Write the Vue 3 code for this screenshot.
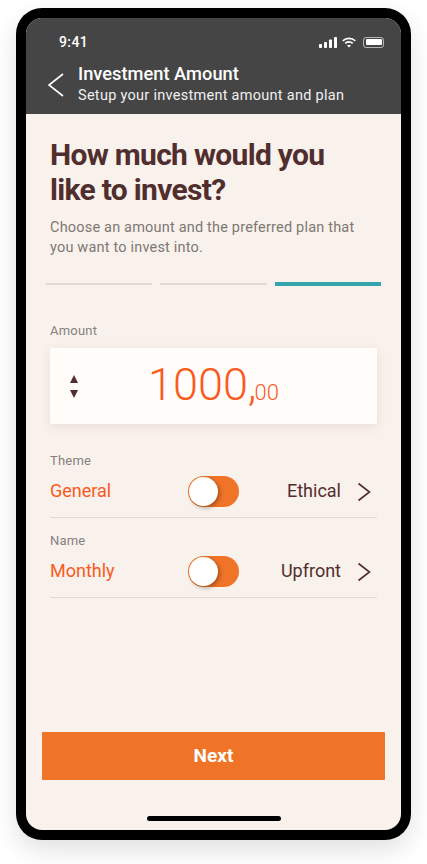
<template>
  <div class="page">
    <div class="phone">
      <div class="screen">
        <header class="header">
          <div class="status">
            <span class="time">9:41</span>
            <div class="status-icons">
              <svg width="18" height="11" viewBox="0 0 18 11">
                <rect x="0" y="7" width="3" height="4" rx="0.7" />
                <rect x="5" y="5" width="3" height="6" rx="0.7" />
                <rect x="10" y="2.5" width="3" height="8.5" rx="0.7" />
                <rect x="15" y="0" width="3" height="11" rx="0.7" />
              </svg>
              <svg width="16" height="11" viewBox="0 0 16 11">
                <path d="M8 2.2c2.2 0 4.2.9 5.7 2.3l1.1-1.2A9.9 9.9 0 0 0 8 .6 9.9 9.9 0 0 0 1.200 3.300l1.100 1.200A8.300 8.300 0 0 1 8 2.200z" />
                <path d="M8 5.800c1.200 0 2.300.5 3.100 1.200l1.200-1.200A6.300 6.300 0 0 0 8 4.100c-1.700 0-3.200.6-4.300 1.700l1.200 1.200A4.600 4.600 0 0 1 8 5.800z" />
                <path d="M8 7.700c-.8 0-1.400.3-1.900.7L8 10.600l1.900-2.200A2.900 2.900 0 0 0 8 7.700z" />
              </svg>
              <div class="battery"><div class="battery-fill"></div></div>
            </div>
          </div>
          <div class="nav">
            <svg class="back" width="18" height="26" viewBox="0 0 18 26">
              <path d="M16 2 2 13l14 11" />
            </svg>
            <div>
              <div class="nav-title">Investment Amount</div>
              <div class="nav-sub">Setup your investment amount and plan</div>
            </div>
          </div>
        </header>

        <main class="body">
          <h1 class="title">How much would you<br />like to invest?</h1>
          <p class="intro">Choose an amount and the preferred plan that<br />you want to invest into.</p>

          <div class="steps">
            <div v-for="step in steps" :key="step" class="step" :class="{ active: step === current }"></div>
          </div>

          <div class="form">
            <div class="label">Amount</div>
            <div class="amount-card">
              <div class="stepper">
                <span class="tri up"></span>
                <span class="tri down"></span>
              </div>
              <div class="amount">1000,<small>00</small></div>
            </div>

            <div class="rows">
              <div v-for="row in rows" :key="row.label" class="row">
                <div class="label">{{ row.label }}</div>
                <div class="row-line">
                  <span class="left">{{ row.left }}</span>
                  <div class="toggle"><div class="knob"></div></div>
                  <div class="right">
                    <span>{{ row.right }}</span>
                    <svg width="14" height="20" viewBox="0 0 14 20">
                      <path d="M1.500 1.500l11 8.500-11 8.500" />
                    </svg>
                  </div>
                </div>
              </div>
            </div>
          </div>

          <div class="footer">
            <button class="next">Next</button>
            <div class="home"></div>
          </div>
        </main>
      </div>
    </div>
  </div>
</template>

<script setup>
const steps = [1, 2, 3]
const current = 3

const rows = [
  { label: 'Theme', left: 'General', right: 'Ethical' },
  { label: 'Name', left: 'Monthly', right: 'Upfront' }
]
</script>

<style scoped>
.page {
  width: 427px;
  height: 864px;
  padding: 8px 16px 24px;
  box-sizing: border-box;
  font-family: Roboto, "Noto Sans", sans-serif;
}

.phone {
  height: 832px;
  padding: 10px;
  box-sizing: border-box;
  background: #000;
  border-radius: 26px;
  box-shadow: 0 10px 24px rgba(0, 0, 0, 0.12);
}

.screen {
  height: 100%;
  display: flex;
  flex-direction: column;
  background: #f9f1eb;
  border-radius: 16px;
  overflow: hidden;
}

.header {
  height: 96px;
  flex: none;
  background: #454545;
  color: #fff;
}

.status {
  display: flex;
  justify-content: space-between;
  align-items: center;
  padding: 15px 17px 0 33px;
}

.time {
  font-size: 14px;
  font-weight: 500;
  line-height: 18px;
  letter-spacing: 0.4px;
}

.status-icons {
  display: flex;
  align-items: center;
  gap: 4px;
}

.status-icons svg {
  fill: #fff;
}

.battery {
  width: 21px;
  height: 11px;
  padding: 1.500px;
  margin-left: 2px;
  box-sizing: border-box;
  border: 1px solid rgba(255, 255, 255, 0.6);
  border-radius: 3px;
}

.battery-fill {
  height: 100%;
  background: #fff;
  border-radius: 1px;
}

.nav {
  display: flex;
  align-items: center;
  gap: 13px;
  padding: 11px 0 0 21px;
}

.back {
  margin-top: 1px;
}

.back path {
  fill: none;
  stroke: #fff;
  stroke-width: 1.600;
}

.nav-title {
  font-size: 18.300px;
  font-weight: 500;
  line-height: 24px;
}

.nav-sub {
  font-size: 14.500px;
  line-height: 20px;
  letter-spacing: 0.28px;
  color: #f0f0f0;
}

.body {
  flex: 1;
  display: flex;
  flex-direction: column;
  padding: 0 24px;
}

.title {
  margin: 23px 0 0;
  font-size: 30px;
  font-weight: 700;
  line-height: 35px;
  letter-spacing: -0.7px;
  color: #512e2e;
}

.intro {
  margin: 11px 0 0;
  font-size: 14.500px;
  line-height: 20px;
  letter-spacing: 0.19px;
  color: #7d7875;
}

.steps {
  display: flex;
  gap: 8px;
  align-items: center;
  margin: 24px -4px 0;
  height: 4px;
}

.step {
  flex: 1;
  height: 2px;
  background: #e3d9d3;
}

.step.active {
  height: 4px;
  background: #33a5ac;
}

.form {
  margin: 37px 0 0;
}

.label {
  font-size: 13px;
  line-height: 16px;
  letter-spacing: 0.2px;
  color: #858180;
}

.amount-card {
  display: flex;
  align-items: center;
  height: 76px;
  margin: 9px 0 0;
  background: #fffcfa;
  border-radius: 2px;
  box-shadow: 0 3px 10px rgba(120, 90, 70, 0.12);
}

.stepper {
  display: flex;
  flex-direction: column;
  gap: 7px;
  margin-left: 20px;
}

.tri {
  width: 0;
  height: 0;
  border-left: 4px solid transparent;
  border-right: 4px solid transparent;
}

.tri.up {
  border-bottom: 8px solid #512e2e;
}

.tri.down {
  border-top: 8px solid #512e2e;
}

.amount {
  margin: 0 0 4px 70px;
  font-size: 45px;
  font-weight: 300;
  line-height: 1;
  color: #fa5a1e;
}

.amount small {
  font-size: 22px;
  margin-left: -2px;
}

.rows {
  margin-top: 28px;
}

.row {
  height: 66px;
  box-sizing: border-box;
  border-bottom: 1px solid #e3d9d3;
}

.row + .row {
  margin-top: 14px;
}

.row .label {
  line-height: 18px;
}

.row-line {
  display: flex;
  align-items: center;
  height: 31px;
  margin-top: 6px;
}

.left {
  width: 138px;
  margin-bottom: 2px;
  font-size: 18px;
  color: #fa5a1e;
}

.toggle {
  width: 51px;
  height: 31px;
  padding: 1px;
  box-sizing: border-box;
  background: #f07428;
  border-radius: 16px;
}

.knob {
  width: 29px;
  height: 29px;
  background: #fff;
  border-radius: 50%;
  box-shadow: 2px 2px 4px rgba(0, 0, 0, 0.3);
}

.right {
  flex: 1;
  display: flex;
  justify-content: flex-end;
  align-items: center;
  gap: 16px;
  padding-right: 6px;
  font-size: 18px;
  color: #512e2e;
}

.right span {
  margin-bottom: 2px;
}

.right path {
  fill: none;
  stroke: #512e2e;
  stroke-width: 1.600;
}

.footer {
  margin-top: auto;
  display: flex;
  flex-direction: column;
  align-items: center;
}

.next {
  width: 343px;
  height: 48px;
  padding: 0 0 2px;
  border: 0;
  border-radius: 1px;
  background: #f07428;
  color: #fff;
  font-family: inherit;
  font-size: 19px;
  font-weight: 700;
}

.home {
  width: 134px;
  height: 5px;
  margin: 36px 0 9px;
  background: #000;
  border-radius: 3px;
}
</style>
